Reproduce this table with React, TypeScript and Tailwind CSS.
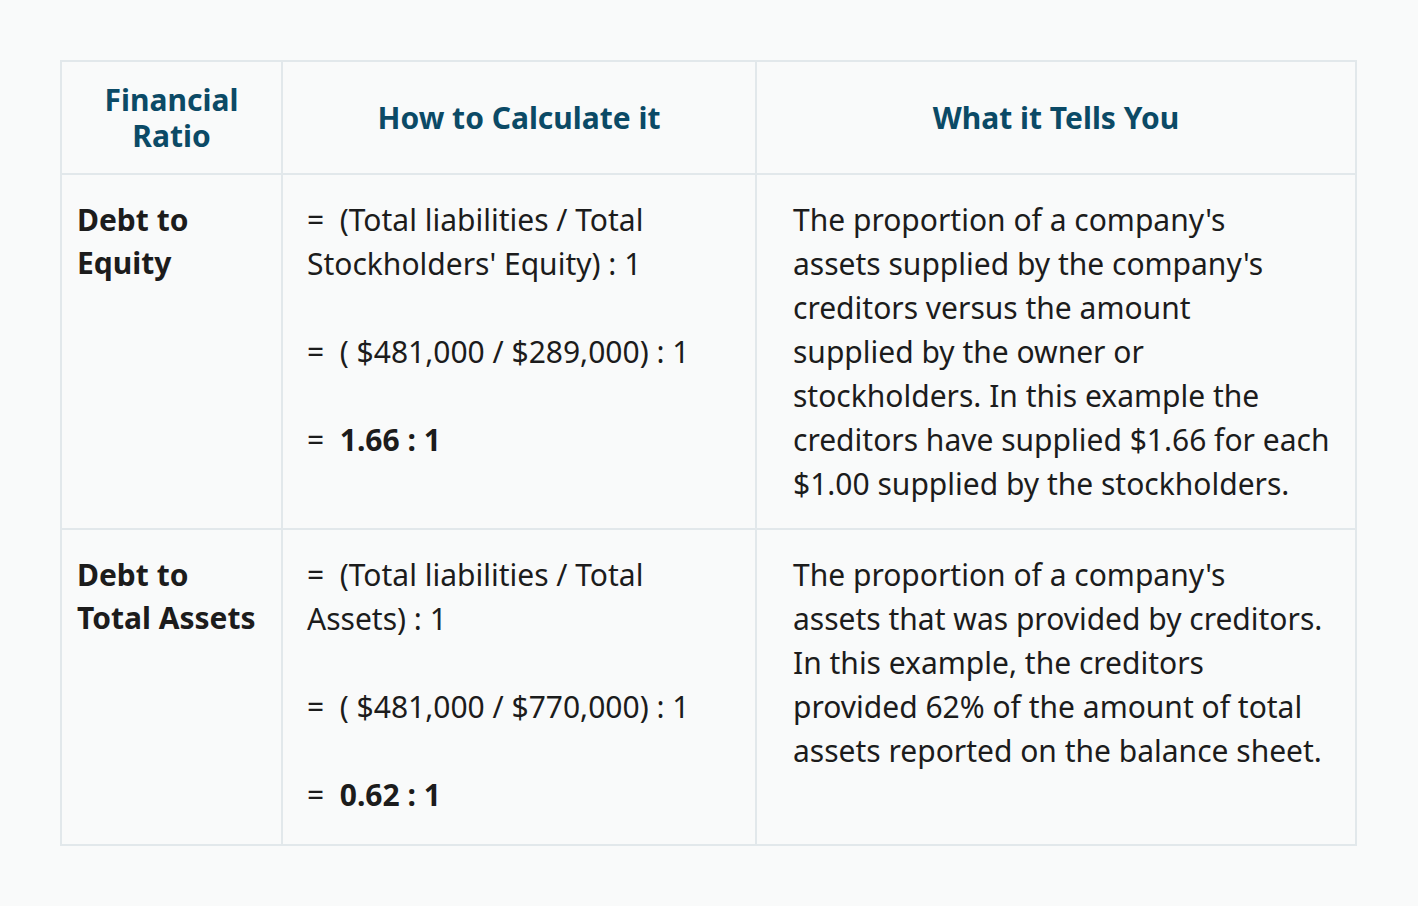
import React from "react";

const body = "text-[#1c1c1c] text-[30px] leading-[44px]";

function Lines({ lines }: { lines: string[] }) {
  return (
    <>
      {lines.map((l, i) => (
        <span key={i} className="block whitespace-nowrap">{l}</span>
      ))}
    </>
  );
}

export default function App() {
  return (
    <div className="min-h-[906px] w-full bg-[#f9fafa] pt-[60px] pl-[60px]" style={{ fontFamily: "'Noto Sans', sans-serif" }}>
      <div className="grid w-[1297px] grid-cols-[221px_474px_600px] border-l-2 border-t-2 border-[#e2e8eb]">
        {/* header */}
        <div className="flex h-[113px] items-center justify-center border-b-2 border-r-2 border-[#e2e8eb] text-center text-[30px] font-bold leading-[36px] text-[#0b4a66]">
          <div>
            <span className="block">Financial</span>
            <span className="block">Ratio</span>
          </div>
        </div>
        <div className="flex h-[113px] items-center justify-center border-b-2 border-r-2 border-[#e2e8eb] text-center text-[30px] font-bold leading-[36px] text-[#0b4a66]">
          How to Calculate it
        </div>
        <div className="flex h-[113px] items-center justify-center border-b-2 border-r-2 border-[#e2e8eb] text-center text-[30px] font-bold leading-[36px] text-[#0b4a66]">
          What it Tells You
        </div>

        {/* row 1 */}
        <div className="border-b-2 border-r-2 border-[#e2e8eb] pl-[15px] pr-2 pt-[23px] font-bold leading-[43px] text-[30px] text-[#1c1c1c]">
          Debt to<br />Equity
        </div>
        <div className={`border-b-2 border-r-2 border-[#e2e8eb] pl-[24px] pr-2 pt-[23px] ${body}`}>
          <p>=&nbsp; (Total liabilities / Total Stockholders' Equity) : 1</p>
          <p className="mt-[44px]">=&nbsp; ( $481,000 / $289,000) : 1</p>
          <p className="mt-[44px]">=&nbsp; <b>1.66 : 1</b></p>
        </div>
        <div className={`border-b-2 border-r-2 border-[#e2e8eb] pl-[36px] pr-[16px] pt-[23px] pb-[22px] ${body}`}>
          <Lines
            lines={[
              "The proportion of a company's",
              "assets supplied by the company's",
              "creditors versus the amount",
              "supplied by the owner or",
              "stockholders. In this example the",
              "creditors have supplied $1.66 for each",
              "$1.00 supplied by the stockholders.",
            ]}
          />
        </div>

        {/* row 2 */}
        <div className="border-b-2 border-r-2 border-[#e2e8eb] pl-[15px] pr-2 pt-[23px] font-bold leading-[43px] text-[30px] text-[#1c1c1c]">
          Debt to<br />Total Assets
        </div>
        <div className={`border-b-2 border-r-2 border-[#e2e8eb] pl-[24px] pr-2 pt-[23px] pb-[27px] ${body}`}>
          <p>=&nbsp; (Total liabilities / Total Assets) : 1</p>
          <p className="mt-[44px]">=&nbsp; ( $481,000 / $770,000) : 1</p>
          <p className="mt-[44px]">=&nbsp; <b>0.62 : 1</b></p>
        </div>
        <div className={`border-b-2 border-r-2 border-[#e2e8eb] pl-[36px] pr-[16px] pt-[23px] ${body}`}>
          <Lines
            lines={[
              "The proportion of a company's",
              "assets that was provided by creditors.",
              "In this example, the creditors",
              "provided 62% of the amount of total",
              "assets reported on the balance sheet.",
            ]}
          />
        </div>
      </div>
    </div>
  );
}
